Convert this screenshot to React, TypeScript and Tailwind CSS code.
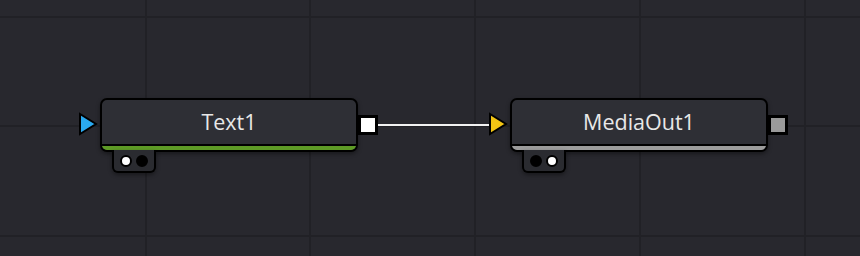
import React from "react"

const vLines = [145, 309, 474, 639, 804]
const hLines = [16, 125, 235]

function Node({
  x,
  label,
  bar,
  inColor,
  outColor,
  dots,
}: {
  x: number
  label: string
  bar: string
  inColor: string
  outColor: string
  dots: [string, string]
}) {
  return (
    <div className="absolute top-[98px]" style={{ left: x }}>
      <div className="relative">
        {/* input triangle */}
        <svg className="absolute left-[-22px] top-[14px]" width="20" height="24" viewBox="0 0 20 24">
          <polygon points="2,2 18,12 2,22" fill={inColor} stroke="#000" strokeWidth="2" strokeLinejoin="miter" />
        </svg>

        <div className="w-[258px] h-[54px] rounded-[7px] border-2 border-black bg-[#2e2f35] overflow-hidden flex flex-col shadow-[0_2px_4px_rgba(0,0,0,0.4)]">
          <div className="flex-1 flex items-center justify-center text-[21.5px] leading-none text-[#e8e8e8] font-['Open_Sans',sans-serif] pb-[1px]">
            {label}
          </div>
          <div className="h-[2px] bg-black"></div>
          <div className="h-[4px]" style={{ background: bar }}></div>
        </div>

        {/* output square */}
        <div
          className="absolute left-[258px] top-[17px] w-[20px] h-[20px] border-[3px] border-black"
          style={{ background: outColor }}
        ></div>

        {/* dots tab */}
        <div className="absolute left-[12px] top-[52px] w-[44px] h-[23px] bg-[#2a2b30] border-2 border-t-0 border-black rounded-b-[6px] flex items-center justify-center gap-[4px] pt-[1px] shadow-[0_2px_4px_rgba(0,0,0,0.4)]">
          <div className="w-[12px] h-[12px] rounded-full border-2 border-black" style={{ background: dots[0] }}></div>
          <div className="w-[12px] h-[12px] rounded-full border-2 border-black" style={{ background: dots[1] }}></div>
        </div>
      </div>
    </div>
  )
}

export default function App() {
  return (
    <div className="relative w-[860px] h-[256px] bg-[#28282e] overflow-hidden">
      {vLines.map((x) => (
        <div key={"v" + x} className="absolute top-0 bottom-0 w-[2px] bg-[#212126]" style={{ left: x }}></div>
      ))}
      {hLines.map((y) => (
        <div key={"h" + y} className="absolute left-0 right-0 h-[2px] bg-[#212126]" style={{ top: y }}></div>
      ))}

      {/* connection */}
      <div className="absolute left-[376px] top-[124px] w-[116px] h-[2px] bg-[#f2f2f2]"></div>

      <Node x={100} label="Text1" bar="#5e9b26" inColor="#2aa9f0" outColor="#ffffff" dots={["#ffffff", "#000000"]} />
      <Node x={510} label="MediaOut1" bar="#9c9c9c" inColor="#f2c414" outColor="#9a9a9a" dots={["#000000", "#ffffff"]} />
    </div>
  )
}
